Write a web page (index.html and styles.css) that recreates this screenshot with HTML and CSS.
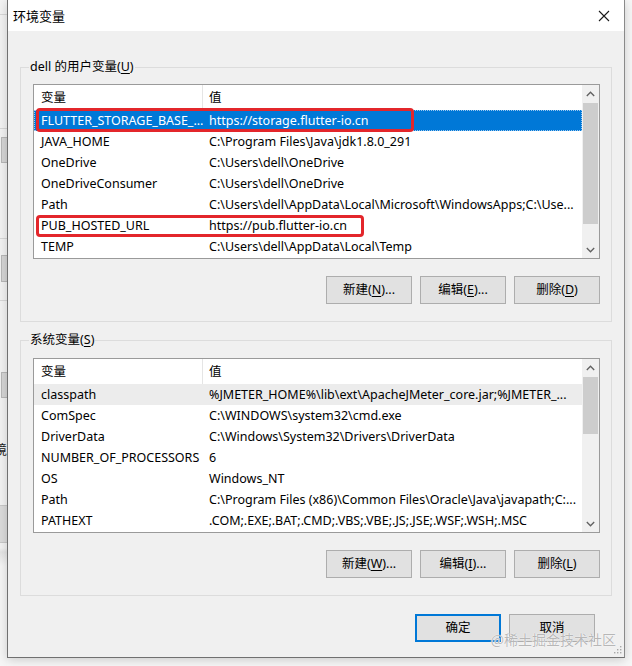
FILE: index.html
```html
<!DOCTYPE html>
<html lang="zh-CN">
<head>
<meta charset="utf-8">
<title>环境变量</title>
<link rel="stylesheet" href="styles.css">
</head>
<body>
<div class="desk">
  <div class="bgwin">
    <div class="bw-line bw-a"></div>
    <div class="bw-line bw-b"></div>
    <div class="bw-box bw-c"></div>
    <div class="bw-line bw-d"></div>
    <div class="bw-box bw-e"></div>
    <div class="bw-line bw-f"></div>
    <div class="bw-box bw-g"></div>
    <div class="bw-text">境</div>
    <div class="bw-bar"></div>
  </div>
  <div class="dialog">
    <div class="titlebar">
      <span class="title">环境变量</span>
      <svg class="close" width="12" height="12" viewBox="0 0 12 12"><path d="M1 1L11 11M11 1L1 11" stroke="#1a1a1a" stroke-width="1.1" fill="none"/></svg>
    </div>
    <div class="dbody">
      <div class="group">
        <span class="legend">dell 的用户变量(<u>U</u>)</span>
        <div class="list">
          <div class="listmain">
            <div class="hdr"><div class="c1">变量</div><div class="c2">值</div></div>
            <div class="row sel"><div class="c1">FLUTTER_STORAGE_BASE_...</div><div class="c2">https://storage.flutter-io.cn</div></div>
            <div class="row"><div class="c1">JAVA_HOME</div><div class="c2">C:\Program Files\Java\jdk1.8.0_291</div></div>
            <div class="row"><div class="c1">OneDrive</div><div class="c2">C:\Users\dell\OneDrive</div></div>
            <div class="row"><div class="c1">OneDriveConsumer</div><div class="c2">C:\Users\dell\OneDrive</div></div>
            <div class="row"><div class="c1">Path</div><div class="c2">C:\Users\dell\AppData\Local\Microsoft\WindowsApps;C:\Use...</div></div>
            <div class="row"><div class="c1">PUB_HOSTED_URL</div><div class="c2">https://pub.flutter-io.cn</div></div>
            <div class="row"><div class="c1">TEMP</div><div class="c2">C:\Users\dell\AppData\Local\Temp</div></div>
          </div>
          <div class="sb">
            <div class="arr"><svg width="9" height="6" viewBox="0 0 9 6"><path d="M0.8 5L4.5 1.2L8.2 5" stroke="#606060" stroke-width="1.3" fill="none"/></svg></div>
            <div class="track"><div class="thumb thumb-u"></div></div>
            <div class="arr"><svg width="9" height="6" viewBox="0 0 9 6"><path d="M0.8 1L4.5 4.8L8.2 1" stroke="#606060" stroke-width="1.3" fill="none"/></svg></div>
          </div>
          <div class="mark mark-1"></div>
          <div class="mark mark-2"></div>
        </div>
        <div class="btns">
          <button class="btn">新建(<u>N</u>)...</button>
          <button class="btn">编辑(<u>E</u>)...</button>
          <button class="btn">删除(<u>D</u>)</button>
        </div>
      </div>
      <div class="group group-sys">
        <span class="legend">系统变量(<u>S</u>)</span>
        <div class="list">
          <div class="listmain">
            <div class="hdr"><div class="c1">变量</div><div class="c2">值</div></div>
            <div class="row hov"><div class="c1">classpath</div><div class="c2">%JMETER_HOME%\lib\ext\ApacheJMeter_core.jar;%JMETER_...</div></div>
            <div class="row"><div class="c1">ComSpec</div><div class="c2">C:\WINDOWS\system32\cmd.exe</div></div>
            <div class="row"><div class="c1">DriverData</div><div class="c2">C:\Windows\System32\Drivers\DriverData</div></div>
            <div class="row"><div class="c1">NUMBER_OF_PROCESSORS</div><div class="c2">6</div></div>
            <div class="row"><div class="c1">OS</div><div class="c2">Windows_NT</div></div>
            <div class="row"><div class="c1">Path</div><div class="c2">C:\Program Files (x86)\Common Files\Oracle\Java\javapath;C:...</div></div>
            <div class="row"><div class="c1">PATHEXT</div><div class="c2">.COM;.EXE;.BAT;.CMD;.VBS;.VBE;.JS;.JSE;.WSF;.WSH;.MSC</div></div>
          </div>
          <div class="sb">
            <div class="arr"><svg width="9" height="6" viewBox="0 0 9 6"><path d="M0.8 5L4.5 1.2L8.2 5" stroke="#606060" stroke-width="1.3" fill="none"/></svg></div>
            <div class="track"><div class="thumb thumb-s"></div></div>
            <div class="arr"><svg width="9" height="6" viewBox="0 0 9 6"><path d="M0.8 1L4.5 4.8L8.2 1" stroke="#606060" stroke-width="1.3" fill="none"/></svg></div>
          </div>
        </div>
        <div class="btns">
          <button class="btn">新建(<u>W</u>)...</button>
          <button class="btn">编辑(<u>I</u>)...</button>
          <button class="btn">删除(<u>L</u>)</button>
        </div>
      </div>
      <div class="okrow">
        <button class="btn btn-ok">确定</button>
        <button class="btn">取消</button>
      </div>
    </div>
    <div class="watermark">@稀土掘金技术社区</div>
    <svg class="grip" width="8" height="8" viewBox="0 0 8 8">
      <rect x="6" y="0" width="1.4" height="1.4" fill="#a8a8a8"/>
      <rect x="3" y="3" width="1.4" height="1.4" fill="#a8a8a8"/>
      <rect x="6" y="3" width="1.4" height="1.4" fill="#a8a8a8"/>
      <rect x="0" y="6" width="1.4" height="1.4" fill="#a8a8a8"/>
      <rect x="3" y="6" width="1.4" height="1.4" fill="#a8a8a8"/>
      <rect x="6" y="6" width="1.4" height="1.4" fill="#a8a8a8"/>
    </svg>
  </div>
</div>
</body>
</html>
```

FILE: styles.css
```css
* { box-sizing: border-box; }
html, body {
  margin: 0;
  padding: 0;
  background: #f7f7f7;
  width: 632px;
  height: 666px;
  overflow: hidden;
}
body {
  font-family: "Noto Sans", "Noto Sans CJK SC", sans-serif;
  font-size: 12.5px;
  color: #000;
}
.desk {
  display: flex;
  align-items: flex-start;
}

/* background window strip on the left */
.bgwin {
  position: relative;
  width: 7px;
  height: 666px;
  background: linear-gradient(#f3f3f3 0, #f3f3f3 548px, #e4e4e4 552px, #f6f6f6 566px);
  overflow: hidden;
}
.bw-line { position: absolute; left: 0; width: 7px; height: 1px; background: #d8d8d8; }
.bw-a { top: 14px; }
.bw-b { top: 128px; }
.bw-d { top: 238px; }
.bw-f { top: 300px; }
.bw-box { position: absolute; left: 1px; width: 8px; background: #d6d6d6; border: 1px solid #b8b8b8; }
.bw-c { top: 137px; height: 26px; }
.bw-e { top: 255px; height: 27px; }
.bw-g { top: 372px; height: 26px; }
.bw-text { position: absolute; left: -6px; top: 440px; font-size: 13px; line-height: 18px; color: #222; }
.bw-bar { position: absolute; left: 0; top: 505px; width: 7px; height: 38px; background: #dcdcdc; border-top: 1px solid #c8c8c8; border-bottom: 1px solid #c8c8c8; }

/* dialog */
.dialog {
  position: relative;
  width: 618px;
  border-left: 1px solid #707070;
  border-right: 1px solid #8a8a8a;
  border-bottom: 1px solid #707070;
  background: #f0f0f0;
  box-shadow: 0 2px 10px rgba(0, 0, 0, 0.18);
}
.titlebar {
  height: 31px;
  background: #fff;
  display: flex;
  align-items: center;
  justify-content: space-between;
  padding: 0 14px 0 5px;
}
.title { font-size: 13px; color: #000; }
.close { display: block; }

.dbody {
  padding: 36px 12px 15px 12px;
}
.group {
  position: relative;
  border: 1px solid #dcdcdc;
  padding: 16px 11px 17px 12px;
}
.group-sys {
  margin-top: 18px;
  padding-top: 17px;
}
.legend {
  position: absolute;
  top: -10px;
  left: 8px;
  padding: 0 1px;
  background: #f0f0f0;
  line-height: 17px;
  white-space: nowrap;
}
u { text-decoration-thickness: 1px; text-underline-offset: 2px; }

.list {
  position: relative;
  height: 175px;
  border: 1px solid #9a9a9a;
  background: #fff;
  display: flex;
  overflow: hidden;
}
.listmain {
  flex: 1;
  min-width: 0;
}
.hdr, .row {
  display: flex;
  white-space: nowrap;
}
.hdr { height: 25px; line-height: 25px; }
.row { height: 21px; line-height: 21px; }
.c1 {
  width: 169px;
  flex: none;
  padding-left: 7px;
  overflow: hidden;
}
.hdr .c1 { border-right: 1px solid #e5e5e5; }
.c2 {
  flex: 1;
  padding-left: 6px;
  overflow: hidden;
}
.row.sel {
  background: #0078d7;
  color: #fff;
  outline: 1px dotted #9cc8f0;
  outline-offset: -1px;
}
.row.hov { background: #ececec; }

.sb {
  width: 17px;
  flex: none;
  background: #f0f0f0;
  display: flex;
  flex-direction: column;
}
.arr {
  height: 17px;
  display: flex;
  align-items: center;
  justify-content: center;
}
.arr svg { display: block; }
.track {
  flex: 1;
  padding-top: 1px;
}
.thumb {
  width: 15px;
  margin: 0 auto;
  background: #cdcdcd;
}
.thumb-u { height: 121px; }
.thumb-s { height: 57px; }

.mark {
  position: absolute;
  left: 2px;
  border: 3px solid #e3262b;
  border-radius: 4px;
}
.mark-1 { top: 23px; width: 378px; height: 24px; }
.mark-2 { top: 130px; width: 328px; height: 22px; }

.btns {
  display: flex;
  justify-content: flex-end;
  gap: 8px;
  margin-top: 17px;
}
.btn {
  width: 86px;
  height: 28px;
  padding: 0;
  background: #e1e1e1;
  border: 1px solid #adadad;
  border-radius: 0;
  font-family: "Noto Sans", "Noto Sans CJK SC", sans-serif;
  font-size: 12.5px;
  color: #000;
  line-height: 24px;
}
.okrow {
  display: flex;
  justify-content: flex-end;
  gap: 8px;
  margin-top: 18px;
  padding-right: 17px;
}
.btn-ok {
  border: 2px solid #0078d7;
}

.watermark {
  position: absolute;
  right: 8px;
  bottom: 9px;
  font-family: "Noto Sans CJK SC", sans-serif;
  font-size: 14px;
  line-height: 18px;
  color: rgba(160, 160, 160, 0.75);
  text-shadow: 0 0 1px #fff, 0 0 1px #fff;
  white-space: nowrap;
}
.grip {
  position: absolute;
  right: 2px;
  bottom: 3px;
}
```
